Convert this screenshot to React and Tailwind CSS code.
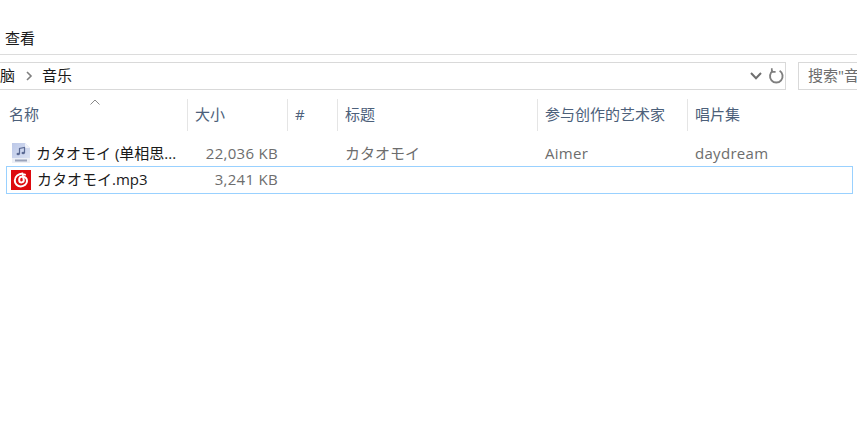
const font = { fontFamily: '"Open Sans","Noto Sans CJK SC",sans-serif' };

function Flac() {
  return (
    <svg width="18" height="20" viewBox="0 0 18 20" className="shrink-0">
      <defs>
        <linearGradient id="fl" x1="0" y1="0" x2="1" y2="1">
          <stop offset="0" stopColor="#bcc8e8" />
          <stop offset="1" stopColor="#dfe5f4" />
        </linearGradient>
      </defs>
      <path d="M0 0H13L18 5V20H0Z" fill="url(#fl)" />
      <path d="M13 0L18 5H13Z" fill="#f0f2f9" />
      <rect x="0" y="15" width="18" height="5" fill="#eceff6" />
      <path d="M7.5 11V5.5L12.5 4.5V10" fill="none" stroke="#5b6a94" strokeWidth="1.2" />
      <ellipse cx="6.2" cy="11" rx="1.7" ry="1.3" fill="#5b6a94" />
      <ellipse cx="11.2" cy="10" rx="1.7" ry="1.3" fill="#5b6a94" />
      <rect x="3" y="16.5" width="12" height="2" fill="#9aa3ba" />
    </svg>
  );
}

function Netease() {
  return (
    <svg width="20" height="20" viewBox="0 0 20 20" className="shrink-0">
      <rect width="20" height="20" fill="#dd0a0f" />
      <path d="M11.5 3.4C7.6 3.8 3.8 6.2 3.8 10.8c0 3.2 2.7 5.6 6 5.6 3.5 0 6.2-2.4 6.2-5.4 0-2.6-2-4.4-4.2-4.4-2.1 0-3.6 1.5-3.6 3.3 0 1.5 1 2.5 2.3 2.5 1.4 0 2.3-1 2.3-2.3L11.9 6C11.7 4.9 12.6 4.1 14 4.6" fill="none" stroke="#fff" strokeWidth="2" strokeLinecap="round" />
    </svg>
  );
}

const cols = [
  ["名称", "w-[188px] pl-[9px]"],
  ["大小", "w-[100px] pl-[7px]"],
  ["#", "w-[50px] pl-[7px]"],
  ["标题", "w-[200px] pl-[7px]"],
  ["参与创作的艺术家", "w-[150px] pl-[7px]"],
  ["唱片集", "w-[150px] pl-[7px]"],
];

export default function App() {
  return (
    <div style={font} className="relative w-[857px] h-[430px] overflow-hidden bg-white text-[15px] text-[#1a1a1a]">
      <div className="h-[55px] border-b border-[#dcdcdc] pt-[28px] pl-[5px] leading-[21px]">查看</div>
      <div className="flex mt-[7px] h-[28px]">
        <div className="flex items-center w-[765px] border-t border-b border-[#d9d9d9] leading-[24px]">
          <span className="w-[15px] overflow-hidden whitespace-nowrap shrink-0 flex justify-end pb-[2px]">脑</span>
          <svg width="8" height="10" viewBox="0 0 8 10" className="ml-[10px]">
            <path d="M2 1L6 5L2 9" fill="none" stroke="#7f7f7f" strokeWidth="1.6" />
          </svg>
          <span className="ml-[9px] pb-[2px]">音乐</span>
          <svg width="12" height="8" viewBox="0 0 12 8" className="ml-auto mr-[3px]">
            <path d="M1 1L6 6.2L11 1" fill="none" stroke="#6f6f6f" strokeWidth="2" />
          </svg>
        </div>
        <div className="flex items-center justify-center w-[21px] border border-l-0 border-[#d9d9d9] pl-[1px]">
          <svg width="16" height="16" viewBox="0 0 16 16">
            <path d="M5 2.8A6.3 6.3 0 1 0 11.6 2.8" fill="none" stroke="#7f7f7f" strokeWidth="1.9" />
            <path d="M3.8 0.2V3.8H7.6" fill="none" stroke="#7f7f7f" strokeWidth="1.7" />
          </svg>
        </div>
        <div className="ml-[12px] flex-1 min-w-0 border border-r-0 border-[#d9d9d9] pl-[9px] leading-[24px] text-[#6d6d6d] whitespace-nowrap overflow-hidden">搜索"音乐"</div>
      </div>
      <div className="relative flex mt-[9px] h-[32px]">
        {cols.map(([t, c], i) => (
          <div key={t} className={`${c} shrink-0 h-full leading-[30px] text-[#4c607a] ${i < 5 ? "border-r border-[#e5e5e5]" : ""}`}>
            {t}
          </div>
        ))}
        <svg width="10" height="6" viewBox="0 0 10 6" className="absolute left-[90px] top-[0px]">
          <path d="M0.5 5.5L5 1L9.5 5.5" fill="none" stroke="#8a8a8a" strokeWidth="1" />
        </svg>
      </div>
      <div className="mt-[9px] ml-[6px] w-[847px]">
        <div className="flex items-center h-[26px] text-[#6d6d6d] tracking-[0.3px]">
          <div className="w-[181px] pl-[6px] flex items-center shrink-0">
            <Flac />
            <span className="ml-[6px] text-[#1a1a1a] whitespace-nowrap tracking-normal">カタオモイ (单相思...</span>
          </div>
          <div className="w-[91px] text-right shrink-0">22,036 KB</div>
          <div className="w-[67px] shrink-0" />
          <div className="w-[200px] shrink-0 tracking-normal">カタオモイ</div>
          <div className="w-[150px] shrink-0">Aimer</div>
          <div>daydream</div>
        </div>
        <div className="flex items-center h-[28px] border border-[#99d1ff] text-[#6d6d6d]">
          <div className="w-[180px] pl-[4px] flex items-center shrink-0">
            <Netease />
            <span className="ml-[6px] text-[#1a1a1a] whitespace-nowrap pb-[2px]">カタオモイ.mp3</span>
          </div>
          <div className="w-[91px] text-right shrink-0 tracking-[0.3px] pb-[2px]">3,241 KB</div>
        </div>
      </div>
    </div>
  );
}
